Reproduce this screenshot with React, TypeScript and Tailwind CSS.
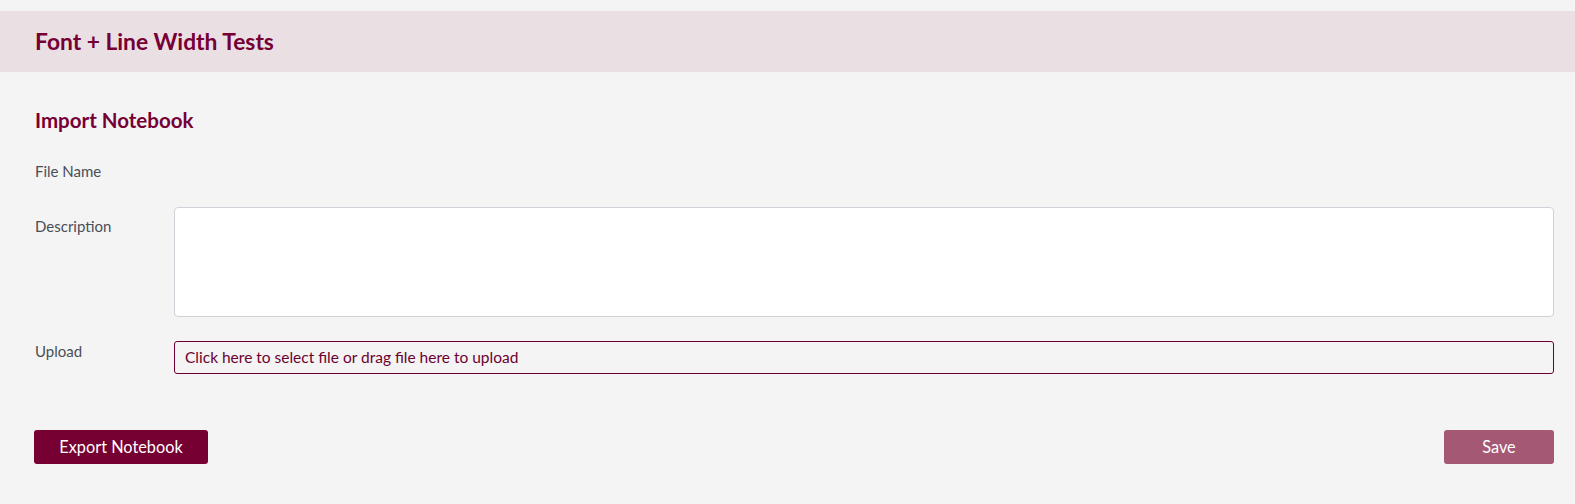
import React from "react";

export default function App() {
  return (
    <div className="min-h-[504px] w-full bg-[#f4f4f4] pt-[11px] font-['Lato','Noto_Sans',sans-serif]">
      <div className="h-[61px] bg-[#eadfe3] px-[35px] flex items-center">
        <h1 className="text-[22.8px] font-bold text-[#760035] leading-none">
          Font + Line Width Tests
        </h1>
      </div>
      <div className="pl-[34px] pr-[21px]">
        <h2 className="mt-[35px] pl-px text-[20.5px] font-bold text-[#760035] leading-[26px]">
          Import Notebook
        </h2>
        <div className="mt-[26px] pl-px flex items-center h-[24px]">
          <span className="w-[139px] text-[15px] text-[#4a4f57]">File Name</span>
        </div>
        <div className="mt-[24px] pl-px flex">
          <span className="w-[139px] pt-[9px] text-[15px] text-[#4a4f57] leading-[20px]">Description</span>
          <div className="flex-1 h-[110px] bg-white border border-[#cfd2d8] rounded-[4px]" />
        </div>
        <div className="mt-[24px] pl-px flex">
          <span className="w-[139px] text-[15px] text-[#4a4f57] leading-[20px]">Upload</span>
          <div className="flex-1 h-[33px] border border-[#6b0030] rounded-[3px] flex items-center px-[10px] text-[15.5px] text-[#6b0030]">
            Click here to select file or drag file here to upload
          </div>
        </div>
        <div className="mt-[56px] flex justify-between">
          <button className="w-[174px] h-[34px] bg-[#760032] text-white text-[16.3px] rounded-[3px]">
            Export Notebook
          </button>
          <button className="w-[110px] h-[34px] bg-[#a45874] text-white text-[16.3px] rounded-[3px]">
            Save
          </button>
        </div>
      </div>
    </div>
  );
}
